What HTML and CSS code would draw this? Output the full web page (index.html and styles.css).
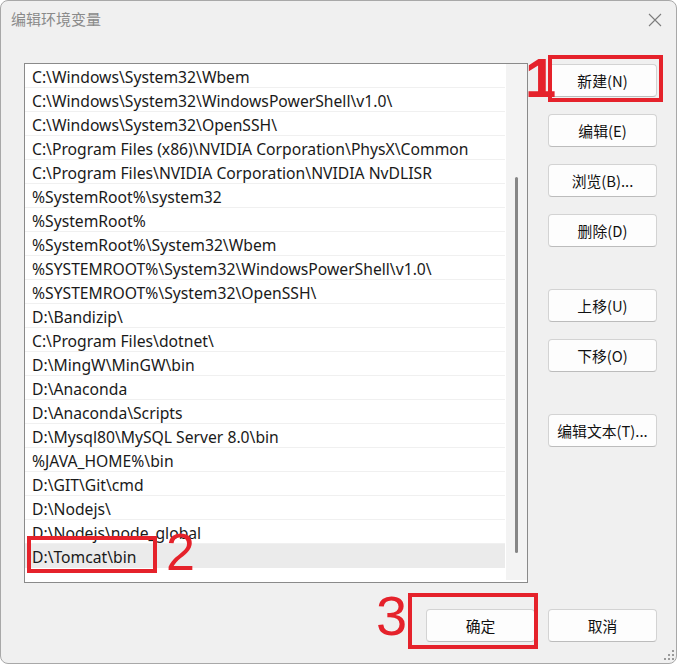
FILE: index.html
```html
<!DOCTYPE html>
<html lang="zh-CN">
<head>
<meta charset="utf-8">
<title>编辑环境变量</title>
<link rel="stylesheet" href="styles.css">
</head>
<body>
<div class="dialog">
  <div class="titlebar">
    <span class="title">编辑环境变量</span>
    <svg class="close" width="14" height="14" viewBox="0 0 14 14">
      <path d="M1 1 L13 13 M13 1 L1 13" stroke="#7d7d7d" stroke-width="1.1" fill="none"/>
    </svg>
  </div>

  <div class="content">
    <div class="list">
      <div class="rows">
        <div class="row">C:\Windows\System32\Wbem</div>
        <div class="row">C:\Windows\System32\WindowsPowerShell\v1.0\</div>
        <div class="row">C:\Windows\System32\OpenSSH\</div>
        <div class="row">C:\Program Files (x86)\NVIDIA Corporation\PhysX\Common</div>
        <div class="row">C:\Program Files\NVIDIA Corporation\NVIDIA NvDLISR</div>
        <div class="row">%SystemRoot%\system32</div>
        <div class="row">%SystemRoot%</div>
        <div class="row">%SystemRoot%\System32\Wbem</div>
        <div class="row">%SYSTEMROOT%\System32\WindowsPowerShell\v1.0\</div>
        <div class="row">%SYSTEMROOT%\System32\OpenSSH\</div>
        <div class="row">D:\Bandizip\</div>
        <div class="row">C:\Program Files\dotnet\</div>
        <div class="row">D:\MingW\MinGW\bin</div>
        <div class="row">D:\Anaconda</div>
        <div class="row">D:\Anaconda\Scripts</div>
        <div class="row">D:\Mysql80\MySQL Server 8.0\bin</div>
        <div class="row">%JAVA_HOME%\bin</div>
        <div class="row">D:\GIT\Git\cmd</div>
        <div class="row">D:\Nodejs\</div>
        <div class="row">D:\Nodejs\node_global</div>
        <div class="row selected">D:\Tomcat\bin</div>
      </div>
      <div class="scrollbar"><div class="thumb"></div></div>
    </div>

    <div class="side">
      <button class="btn">新建(N)</button>
      <button class="btn">编辑(E)</button>
      <button class="btn">浏览(B)...</button>
      <button class="btn">删除(D)</button>
      <button class="btn group">上移(U)</button>
      <button class="btn">下移(O)</button>
      <button class="btn group">编辑文本(T)...</button>
    </div>
  </div>

  <div class="footer">
    <button class="btn">确定</button>
    <button class="btn">取消</button>
  </div>

  <!-- red step markers drawn over the dialog -->
  <div class="mark box1"></div>
  <span class="num num1">1</span>
  <div class="mark box2"></div>
  <span class="num num2">2</span>
  <div class="mark box3"></div>
  <span class="num num3">3</span>

  <svg class="grip" width="10" height="10" viewBox="0 0 10 10">
    <g fill="#9a9a9a">
      <rect x="8" y="0" width="2" height="2"/>
      <rect x="4" y="4" width="2" height="2"/>
      <rect x="8" y="4" width="2" height="2"/>
      <rect x="0" y="8" width="2" height="2"/>
      <rect x="4" y="8" width="2" height="2"/>
      <rect x="8" y="8" width="2" height="2"/>
    </g>
  </svg>
</div>
</body>
</html>
```

FILE: styles.css
```css
* {
  box-sizing: border-box;
}

html, body {
  margin: 0;
  padding: 0;
  background: #ffffff;
}

body {
  font-family: "Noto Sans", "Noto Sans CJK SC", sans-serif;
  color: #1a1a1a;
}

.dialog {
  position: relative;
  width: 677px;
  height: 664px;
  background: #f0f0f0;
  border: 1px solid #a8a8a8;
  border-radius: 8px;
  display: flex;
  flex-direction: column;
  overflow: hidden;
}

.titlebar {
  height: 62px;
  display: flex;
  justify-content: space-between;
  align-items: flex-start;
  padding: 7px 14px 0 10px;
}

.title {
  font-family: "Noto Sans CJK SC", sans-serif;
  font-size: 15px;
  line-height: 22px;
  color: #8a8a8a;
}

.close {
  margin-top: 5px;
}

.content {
  display: flex;
  gap: 20px;
  padding-left: 23px;
  height: 520px;
}

.list {
  width: 504px;
  height: 520px;
  background: #ffffff;
  border: 1px solid #8a8a8a;
  display: flex;
}

.rows {
  width: 481px;
}

.row {
  height: 24px;
  line-height: 23px;
  padding: 2px 0 0 7px;
  font-size: 15.7px;
  white-space: nowrap;
  border-bottom: 1px solid #f0f0f0;
  margin-right: 1px;
  overflow: hidden;
}

.row.selected {
  background: #ebebeb;
  border-bottom-color: #ebebeb;
}

.scrollbar {
  width: 21px;
  height: 516px;
  background: #f3f3f3;
  display: flex;
  justify-content: center;
  padding-top: 113px;
}

.thumb {
  width: 3px;
  height: 376px;
  background: #868686;
  border-radius: 2px;
}

.side {
  display: flex;
  flex-direction: column;
  gap: 17px;
  padding-top: 1px;
}

.btn {
  width: 109px;
  height: 33px;
  padding: 0;
  background: #fdfdfd;
  border: 1px solid #d3d3d3;
  border-bottom-color: #bcbcbc;
  border-radius: 4px;
  font-family: "Noto Sans CJK SC", sans-serif;
  font-size: 14.8px;
  color: #111111;
}

.side .group {
  margin-top: 25px;
}

.footer {
  display: flex;
  justify-content: flex-end;
  gap: 13px;
  padding: 26px 19px 0 0;
}

.mark {
  position: absolute;
  border: 4px solid #e5222b;
}

.box1 { left: 547px; top: 54px; width: 115px; height: 47px; }
.box2 { left: 26px; top: 535px; width: 130px; height: 37px; }
.box3 { left: 407px; top: 592px; width: 130px; height: 56px; }

.num {
  position: absolute;
  font-family: "Liberation Sans", Arial, sans-serif;
  color: #e5222b;
  line-height: 1;
}

.num1 { left: 524px; top: 49px; font-size: 56px; font-weight: bold; }
.num2 { left: 165px; top: 525px; font-size: 52px; }
.num3 { left: 375px; top: 587px; font-size: 56px; }

.grip {
  position: absolute;
  right: 2px;
  bottom: 3px;
}
```
